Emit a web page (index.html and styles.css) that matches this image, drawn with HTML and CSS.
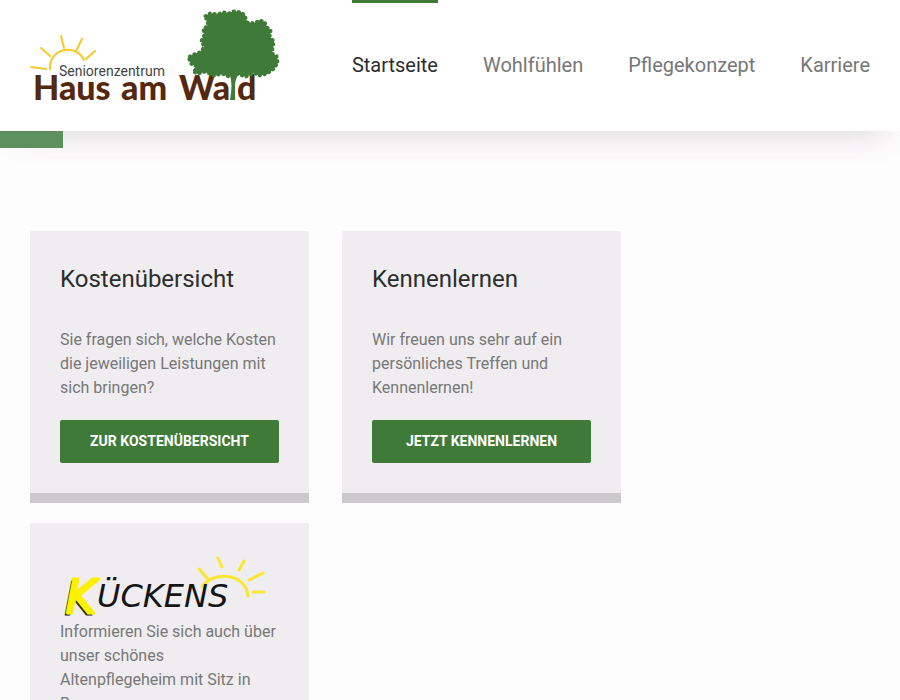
FILE: index.html
```html
<!DOCTYPE html>
<html lang="de">
<head>
    <meta charset="UTF-8">
    <meta name="viewport" content="width=device-width, initial-scale=1.0">
    <title>Seniorenzentrum Haus am Wald</title>
    <link rel="stylesheet" href="styles.css">
</head>
<body>
    <header class="header">
        <a class="logo" href="#" aria-label="Seniorenzentrum Haus am Wald">
            <svg width="252" height="100" viewBox="0 0 252 100">
                <g class="logo-sun">
                    <path d="M20 63 C19 42 46 37 54 54"/>
                    <path d="M1 61 L16 63 M11 42 L20 50 M31 30 L34 42 M52 33 L46 45 M65 45 L56 53"/>
                </g>
                <text class="logo-small" x="29" y="70">Seniorenzentrum</text>
                <text class="logo-name" y="94"><tspan x="3">Haus</tspan> <tspan x="91">am</tspan> <tspan x="149">Wa</tspan><tspan class="logo-trunk" x="199">l</tspan><tspan x="207">d</tspan></text>
                <path class="logo-leaf" d="M200 68 L209 68 Q205 73 205 80 L205 94 L200 94 L202 80 Z"/>
                <path class="logo-leaf crown" d="M175 10 L180 7 L187 8 L194 6 L199 7 L204 5 L211 6 L215 9 L217 16 L224 17 L230 14 L235 16 L237 21 L241 24 L240 31 L244 35 L243 42 L242 47 L247 50 L248 57 L244 63 L237 68 L229 70 L224 67 L216 71 L206 68 L199 71 L192 68 L184 70 L175 66 L168 68 L163 66 L167 61 L161 58 L158 51 L164 48 L170 46 L174 41 L171 35 L174 29 L173 23 L178 19 Z"/>
            </svg>
        </a>
        <nav class="nav">
            <a class="active" href="#">Startseite</a>
            <a href="#">Wohlfühlen</a>
            <a href="#">Pflegekonzept</a>
            <a href="#">Karriere</a>
        </nav>
    </header>
    <div class="accent"></div>

    <main class="cards">
        <section class="card">
            <h2>Kostenübersicht</h2>
            <p>Sie fragen sich, welche Kosten die jeweiligen Leistungen mit sich bringen?</p>
            <a class="button" href="#">Zur Kostenübersicht</a>
        </section>
        <section class="card">
            <h2>Kennenlernen</h2>
            <p>Wir freuen uns sehr auf ein persönliches Treffen und Kennenlernen!</p>
            <a class="button" href="#">Jetzt kennenlernen</a>
        </section>
        <section class="card">
            <svg class="kueckens" width="210" height="67" viewBox="0 0 210 67">
                <g class="kueckens-sun">
                    <path d="M142 34 C153 17 186 20 188 43"/>
                    <path d="M139 16 L148 26 M158 5 L162 14 M184 8 L179 17 M203 20 L189 27 M193 39 L204 39"/>
                </g>
                <text class="kueckens-k shade" x="4" y="62">K</text>
                <text class="kueckens-k" x="6" y="60">K</text>
                <text class="kueckens-rest" x="37" y="54">ÜCKENS</text>
            </svg>
            <p>Informieren Sie sich auch über unser schönes Altenpflegeheim mit Sitz in Bremen.</p>
            <a class="button" href="#">Zur Webseite</a>
        </section>
    </main>
</body>
</html>
```

FILE: styles.css
```css
* {
    box-sizing: border-box;
}
body {
    margin: 0;
    background-color: #fefdfe;
    color: #777;
    font-family: Roboto, sans-serif;
    font-size: 16px;
    line-height: 24px;
}
.header {
    display: flex;
    justify-content: space-between;
    padding: 0 30px;
    background-color: #fefffe;
    box-shadow: 0 20px 30px -15px rgba(60,40,50,0.16);
}
.logo {
    padding-top: 6px;
}
.logo svg {
    display: block;
    overflow: visible;
}
.logo-sun {
    fill: none;
    stroke: #f8c927;
    stroke-width: 2;
    stroke-linecap: round;
}
.logo-small {
    font-family: Roboto, sans-serif;
    font-size: 14px;
    fill: #444;
}
.logo-name {
    font-family: Lato, sans-serif;
    font-weight: 900;
    font-size: 34px;
    fill: #54290f;
}
.logo-trunk {
    font-weight: 400;
    fill: #407a39;
}
.logo-leaf {
    fill: #407a39;
}
.crown {
    stroke: #407a39;
    stroke-width: 3;
    stroke-linecap: round;
    stroke-dasharray: 1 4;
}
.nav {
    display: flex;
    gap: 45px;
}
.nav a {
    border-top: 3px solid transparent;
    padding-bottom: 3px;
    color: #777;
    font-size: 20px;
    line-height: 125px;
    text-decoration: none;
}
.nav a.active {
    border-color: #407a39;
    color: #2d2d2d;
}
.accent {
    position: relative;
    width: 7%;
    height: 17px;
    background-color: #5e905e;
}
.cards {
    display: grid;
    grid-template-columns: repeat(auto-fill, 279px);
    gap: 20px 33px;
    padding: 83px 30px 30px;
}
.card {
    padding: 30px;
    background-color: #efedf0;
    border-bottom: 10px solid #cbc9cb;
    border-radius: 2px 2px 0 0;
}
.card h2 {
    margin: 0 0 31px;
    color: #2d2d2d;
    font-size: 24px;
    font-weight: 400;
    line-height: 36px;
}
.card p {
    margin: 0 0 20px;
}
.button {
    display: block;
    padding: 9px 10px 10px;
    background-color: #407a39;
    border-radius: 2px;
    color: #fff;
    font-size: 14px;
    font-weight: 700;
    text-align: center;
    text-decoration: none;
    text-transform: uppercase;
}
.kueckens {
    display: block;
    overflow: visible;
}
.kueckens-sun {
    fill: none;
    stroke: #fae632;
    stroke-width: 3;
    stroke-linecap: round;
}
.kueckens-k {
    font-family: "DejaVu Sans", sans-serif;
    font-size: 46px;
    font-style: italic;
    fill: #fdf000;
    stroke: #fdf000;
    stroke-width: 3;
    stroke-linejoin: round;
}
.kueckens-k.shade {
    fill: #222;
    stroke: #222;
    stroke-width: 1;
}
.kueckens-rest {
    font-family: "DejaVu Sans", sans-serif;
    font-size: 32px;
    font-style: italic;
    font-weight: 200;
    fill: #151515;
}
```
